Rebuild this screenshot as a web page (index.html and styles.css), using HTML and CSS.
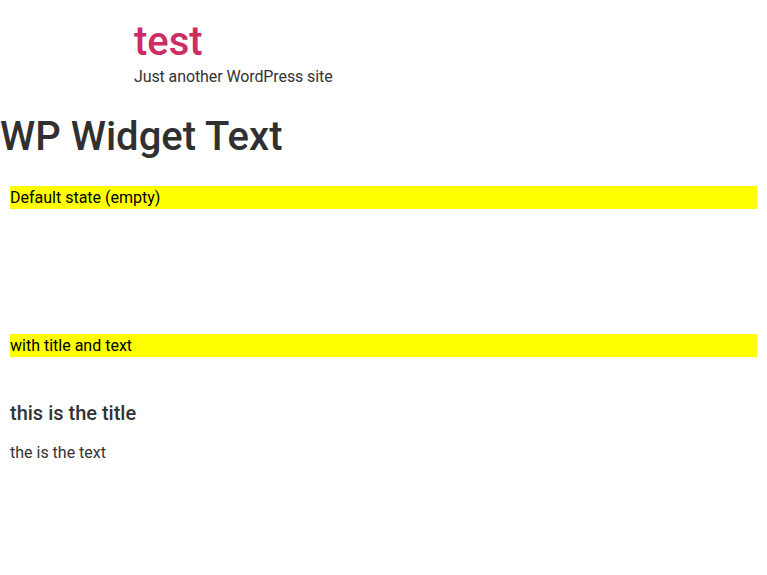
FILE: index.html
```html
<!DOCTYPE html>
<html>
<head>
<meta charset="utf-8">
<link rel="stylesheet" href="styles.css">
</head>
<body>
<header class="site-header">
  <div class="site-title">test</div>
  <div class="site-desc">Just another WordPress site</div>
</header>
<h1 class="page-title">WP Widget Text</h1>
<section class="demo">
  <div class="label">Default state (empty)</div>
  <div class="widget empty"></div>
  <div class="label">with title and text</div>
  <div class="widget">
    <h2 class="widget-title">this is the title</h2>
    <p class="widget-text">the is the text</p>
  </div>
</section>
</body>
</html>
```
FILE: styles.css
```css
html, body { margin: 0; padding: 0; background: #fff; }
body { font-family: Roboto, "Liberation Sans", sans-serif; color: #333; }
.site-header { padding: 18px 0 0 134px; }
.site-title { font-size: 40px; font-weight: 500; line-height: 48px; color: #cc2e63; }
.site-desc { font-size: 16px; line-height: 22px; color: #333; letter-spacing: -0.1px; }
.page-title { margin: 25px 0 0 0; font-size: 40px; font-weight: 500; line-height: 48px; color: #303030; }
.demo { padding: 0 10px; margin-top: 25px; }
.label { background: #ff0; color: #000; font-size: 16px; line-height: 23px; height: 23px; }
.widget.empty { height: 125px; padding: 0; }
.widget { padding-top: 42px; }
.widget-title { margin: 0; font-size: 20px; font-weight: 500; line-height: 28px; color: #333; }
.widget-text { margin: 15px 0 0; font-size: 16px; line-height: 22px; }
```
